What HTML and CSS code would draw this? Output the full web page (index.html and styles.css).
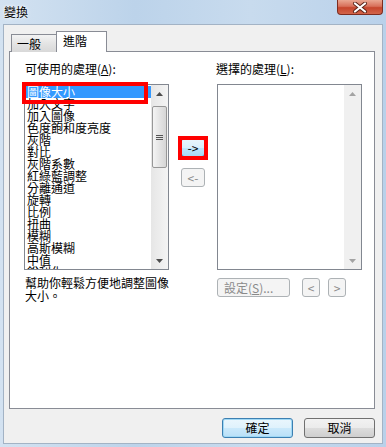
FILE: index.html
```html
<!DOCTYPE html>
<html lang="zh-TW">
<head>
    <meta charset="UTF-8">
    <title>變換</title>
    <link rel="stylesheet" href="styles.css">
</head>
<body>
    <div class="window">
        <div class="titlebar">
            <span class="title">變換</span>
            <button class="close">
                <svg width="16" height="11" viewBox="0 0 16 11">
                    <path d="M3 1.5 L13 9.5 M13 1.5 L3 9.5" stroke="#5a2418" stroke-width="4" stroke-linecap="round"/>
                    <path d="M3 1.5 L13 9.5 M13 1.5 L3 9.5" stroke="#fff" stroke-width="2.2" stroke-linecap="round"/>
                </svg>
            </button>
        </div>

        <div class="client">
            <div class="tabs">
                <div class="tab">一般</div>
                <div class="tab active">進階</div>
            </div>

            <div class="panel">
                <!-- 可使用的處理 -->
                <div class="col">
                    <div class="label">可使用的處理(<u>A</u>):</div>
                    <div class="listbox">
                        <ul class="items">
                            <li class="selected">圖像大小</li>
                            <li>加入文字</li>
                            <li>加入圖像</li>
                            <li>色度飽和度亮度</li>
                            <li>灰階</li>
                            <li>對比</li>
                            <li>灰階系數</li>
                            <li>紅綠藍調整</li>
                            <li>分離通道</li>
                            <li>旋轉</li>
                            <li>比例</li>
                            <li>扭曲</li>
                            <li>模糊</li>
                            <li>高斯模糊</li>
                            <li>中值</li>
                            <li>銳利化</li>
                        </ul>
                        <div class="vscroll">
                            <div class="arrow"><svg width="7" height="4"><path d="M0 4 L3.5 0 L7 4 Z" fill="#4d4d4d"/></svg></div>
                            <div class="thumb"><span></span><span></span><span></span></div>
                            <div class="track"></div>
                            <div class="arrow"><svg width="7" height="4"><path d="M0 0 L3.5 4 L7 0 Z" fill="#4d4d4d"/></svg></div>
                        </div>
                        <span class="mark"></span>
                    </div>
                    <p class="help">幫助你輕鬆方便地調整圖像<br>大小。</p>
                </div>

                <!-- 中間按鈕 -->
                <div class="mid">
                    <button class="btn arrow-btn hot">-&gt;</button>
                    <button class="btn arrow-btn" disabled>&lt;-</button>
                </div>

                <!-- 選擇的處理 -->
                <div class="col">
                    <div class="label right">選擇的處理(<u>L</u>):</div>
                    <div class="listbox">
                        <ul class="items"></ul>
                        <div class="vscroll off">
                            <div class="arrow"><svg width="7" height="4"><path d="M0 4 L3.5 0 L7 4 Z" fill="#a3a3a3"/></svg></div>
                            <div class="track"></div>
                            <div class="arrow"><svg width="7" height="4"><path d="M0 0 L3.5 4 L7 0 Z" fill="#a3a3a3"/></svg></div>
                        </div>
                    </div>
                    <div class="row">
                        <button class="btn setup" disabled>設定(<u>S</u>)...</button>
                        <button class="btn tiny" disabled>&lt;</button>
                        <button class="btn tiny" disabled>&gt;</button>
                    </div>
                </div>
            </div>

            <div class="footer">
                <button class="btn wide ok">確定</button>
                <button class="btn wide">取消</button>
            </div>
        </div>
    </div>
</body>
</html>
```

FILE: styles.css
```css
body {
    margin: 0;
    font-family: "Noto Sans CJK TC", "Liberation Sans", sans-serif;
    font-size: 12px;
    color: #000;
}
.window {
    width: 386px;
    height: 447px;
    background: linear-gradient(90deg, #d3e2f1 0%, #bcd3ea 35%, #c8dbee 65%, #b9d1ea 100%);
    display: flex;
    flex-direction: column;
}
.titlebar {
    height: 24px;
    display: flex;
    justify-content: space-between;
    align-items: flex-start;
}
.title {
    padding: 4px 0 0 4px;
    line-height: 16px;
    font-size: 12px;
    text-shadow: 0 0 4px #fff, 0 0 2px #fff;
}
.close {
    width: 46px;
    height: 15px;
    margin-right: 3px;
    padding: 0;
    border: 1px solid #7d2c1f;
    border-top: none;
    border-radius: 0 0 4px 4px;
    background: linear-gradient(#eaa792 0%, #d8705a 45%, #c6452c 55%, #d2654a 100%);
    display: flex;
    align-items: center;
    justify-content: center;
}
.client {
    margin: 0 3px 3px;
    height: 420px;
    box-sizing: border-box;
    border: 1px solid #a3b3c5;
    background-color: #f0f0f0;
    padding: 6px 0 0 5px;
}
.tabs {
    display: flex;
    align-items: flex-end;
    height: 21px;
    padding-left: 2px;
    margin-bottom: -1px;
    position: relative;
    z-index: 1;
}
.tab {
    box-sizing: border-box;
    width: 46px;
    height: 18px;
    padding-left: 5px;
    line-height: 17px;
    border: 1px solid #898c95;
    border-bottom: none;
    background: linear-gradient(#f3f3f3, #e4e4e4 50%, #d8d8d8);
}
.tab.active {
    width: 51px;
    height: 21px;
    line-height: 18px;
    padding-left: 6px;
    margin-left: -1px;
    background: #fff;
}
.panel {
    width: 366px;
    height: 358px;
    box-sizing: border-box;
    border: 1px solid #898c95;
    background-color: #fff;
    padding: 11px 0 0 14px;
    display: flex;
}
.col {
    width: 145px;
}
.label {
    height: 12px;
    line-height: 12px;
    padding-left: 1px;
    margin-bottom: 9px;
    white-space: nowrap;
}
.label.right {
    padding-left: 0;
    margin-left: -1px;
}
.listbox {
    position: relative;
    height: 186px;
    box-sizing: border-box;
    border: 1px solid #828790;
    display: flex;
}
.items {
    flex: 1;
    margin: 0;
    padding: 1px 0 0 1px;
    list-style: none;
    overflow: hidden;
}
.items li {
    height: 12px;
    line-height: 12px;
    padding-left: 1px;
    white-space: nowrap;
}
.items li.selected {
    background-color: #3399ff;
    color: #fff;
}
.mark {
    position: absolute;
    left: -3px;
    top: -3px;
    width: 126px;
    height: 22px;
    box-sizing: border-box;
    border: 4px solid #ff0000;
}
.vscroll {
    width: 17px;
    display: flex;
    flex-direction: column;
    background: linear-gradient(90deg, #e6e6e6, #f4f4f4);
}
.vscroll.off {
    background: #f0f0f0;
}
.vscroll .arrow {
    height: 17px;
    display: flex;
    align-items: center;
    justify-content: center;
}
.vscroll .track {
    flex: 1;
}
.thumb {
    height: 62px;
    margin: 4px 1px 0;
    box-sizing: border-box;
    border: 1px solid #979797;
    border-radius: 2px;
    background: linear-gradient(90deg, #f4f4f4, #e4e4e4 50%, #d6d6d6);
    display: flex;
    flex-direction: column;
    align-items: center;
    justify-content: center;
    gap: 1px;
}
.thumb span {
    width: 7px;
    height: 1px;
    background-color: #555;
}
.help {
    margin: 6px 0 0;
    padding-left: 1px;
    line-height: 13px;
    white-space: nowrap;
}
.mid {
    width: 48px;
    padding-top: 75px;
    display: flex;
    flex-direction: column;
    align-items: center;
    gap: 11px;
}
.btn {
    box-sizing: border-box;
    height: 19px;
    padding: 0;
    font-family: inherit;
    font-size: 12px;
    line-height: 16px;
    color: #000;
    border: 1px solid #707070;
    border-radius: 3px;
    background: linear-gradient(#f2f2f2 0%, #ebebeb 50%, #dddddd 50%, #cfcfcf 100%);
}
.btn:disabled {
    color: #8a8a8a;
    border-color: #adb2b5;
    background: #f4f4f4;
}
.arrow-btn {
    width: 24px;
}
.hot {
    position: relative;
    border-color: #3c7fb1;
    background: linear-gradient(#eaf6fd 0%, #d9f0fc 50%, #bee6fd 50%, #a7d9f5 100%);
}
.hot::after {
    content: "";
    position: absolute;
    left: -4px;
    right: -4px;
    top: -3px;
    bottom: -4px;
    border: 4px solid #ff0000;
}
.row {
    margin-top: 8px;
    display: flex;
}
.setup {
    width: 73px;
    text-align: left;
    padding-left: 6px;
}
.tiny {
    width: 18px;
    margin-left: 12px;
}
.tiny + .tiny {
    margin-left: 8px;
}
.footer {
    margin-top: 9px;
    padding-right: 7px;
    display: flex;
    justify-content: flex-end;
    gap: 11px;
}
.wide {
    width: 71px;
    height: 20px;
}
.ok {
    border-color: #3c7fb1;
    box-shadow: inset 0 0 0 1px #9fd8f5;
    background: linear-gradient(#eaf6fd 0%, #dff2fc 50%, #cbe9fb 50%, #b9e0f7 100%);
}
```
